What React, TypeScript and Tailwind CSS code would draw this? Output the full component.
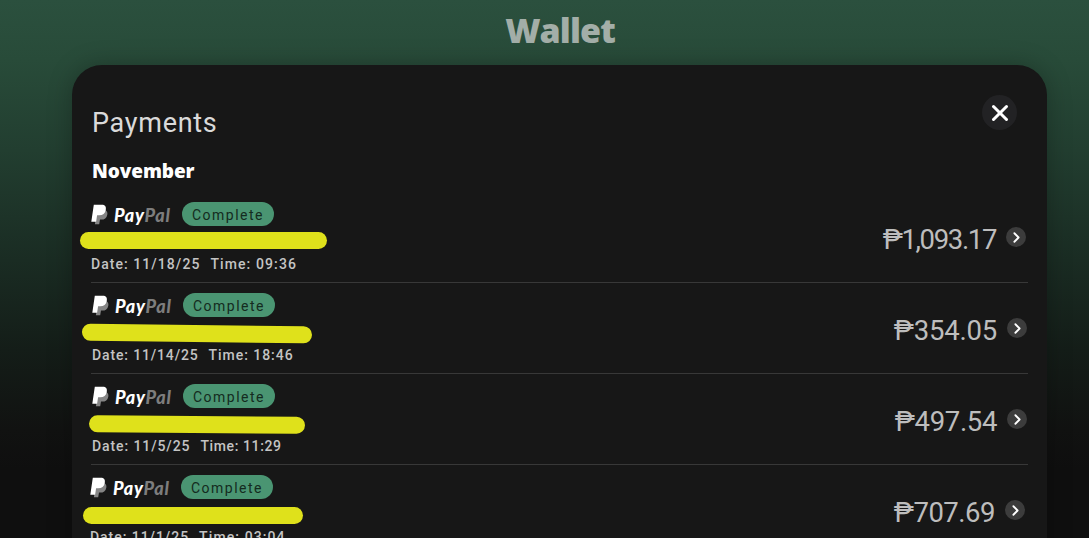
import { ChevronRight, X } from 'lucide-react'

interface Payment {
  amount: string
  date: string
  time: string
  // horizontal nudge of the row and the spacing of its texts
  left: string
  right: string
  amountSpacing: string
  dateSpacing: string
  timeSpacing: string
  marker: string
}

const payments: Payment[] = [
  {
    amount: '₱1,093.17',
    date: '11/18/25',
    time: '09:36',
    left: 'pl-[19px]',
    right: 'pr-[21px]',
    amountSpacing: 'tracking-[-1.35px]',
    dateSpacing: 'tracking-[1.05px]',
    timeSpacing: 'tracking-[1.1px]',
    marker: 'left-[8px] top-[40px] w-[247px]',
  },
  {
    amount: '₱354.05',
    date: '11/14/25',
    time: '18:46',
    left: 'pl-[20px]',
    right: 'pr-[20px]',
    amountSpacing: 'tracking-[-0.2px]',
    dateSpacing: 'tracking-[0.85px]',
    timeSpacing: 'tracking-[0.95px]',
    marker: 'left-[10px] top-[42px] w-[230px] rotate-[0.7deg]',
  },
  {
    amount: '₱497.54',
    date: '11/5/25',
    time: '11:29',
    left: 'pl-[20px]',
    right: 'pr-[20px]',
    amountSpacing: 'tracking-[-0.35px]',
    dateSpacing: 'tracking-[0.9px]',
    timeSpacing: 'tracking-[0.6px]',
    marker: 'left-[17px] top-[42px] w-[216px] rotate-[0.4deg]',
  },
  {
    amount: '₱707.69',
    date: '11/1/25',
    time: '03:04',
    left: 'pl-[18px]',
    right: 'pr-[22px]',
    amountSpacing: 'tracking-[-0.5px]',
    dateSpacing: 'tracking-[0.95px]',
    timeSpacing: 'tracking-[1.1px]',
    marker: 'left-[11px] top-[42px] w-[220px]',
  },
]

function PayPalLogo() {
  return (
    <div className="flex h-6 w-[81px] items-center">
      <svg viewBox="0 0 17 21" className="h-[21px] w-[17px] shrink-0">
        <path
          d="M6.2 6h8.2c1.7 1.1 2.3 2.7 1.9 4.7-.7 3.5-2.8 4.9-6.1 4.9H9l-.8 4.7H3.9z"
          fill="#858585"
        />
        <path
          d="M2.8.8h8.1c3 0 4.5 1.8 3.9 5-.6 3.7-3 5.5-6.6 5.5H6.1l-1 6.5H.3z"
          fill="#fff"
        />
      </svg>
      <span className="ml-[6px] pt-[2px] font-[Lato,sans-serif] text-[18px] font-black italic leading-6 tracking-[0.75px] text-white">
        Pay<span className="text-[#7d7d7d]">Pal</span>
      </span>
    </div>
  )
}

function PaymentRow({ payment }: { payment: Payment }) {
  return (
    <div className={`relative flex h-[91px] shrink-0 justify-between pt-[10px] ${payment.left} ${payment.right}`}>
      <div>
        <div className="flex h-6 items-center gap-[10px]">
          <PayPalLogo />
          <span className="flex h-6 w-[92px] items-center justify-center rounded-full bg-[#4a9572] pt-[2px] text-[14px] tracking-[1.5px] text-[#142b20]">
            Complete
          </span>
        </div>
        <div className="mt-[28px] flex gap-[10px] text-[14px] font-medium leading-5 text-[#c4c4c4]">
          <span className={payment.dateSpacing}>Date: {payment.date}</span>
          <span className={payment.timeSpacing}>Time: {payment.time}</span>
        </div>
      </div>

      <div className="flex h-[72px] items-center gap-[10px]">
        <span className={`pt-[3px] text-[27.5px] leading-8 text-[#bdbdbd] ${payment.amountSpacing}`}>
          {payment.amount}
        </span>
        <button className="mb-[2px] flex size-5 items-center justify-center rounded-full bg-[#3c3c3c]">
          <ChevronRight className="size-[17px] text-white" strokeWidth={2.6} />
        </button>
      </div>

      {/* Marker over the payer details */}
      <div className={`absolute h-[17px] rounded-full bg-[#dfe11b] ${payment.marker}`} />
    </div>
  )
}

export default function App() {
  return (
    <div className="flex h-[538px] w-full flex-col overflow-hidden bg-[linear-gradient(180deg,#2b503e_0px,#284b39_60px,#223e30_150px,#1a2c23_260px,#141d18_350px,#111211_430px,#0f0f0f_470px)] font-[Roboto,sans-serif]">
      <h1 className="ml-[31px] h-[65px] shrink-0 pt-[10px] text-center font-['Open_Sans',sans-serif] text-[34px] font-extrabold leading-10 tracking-[-0.9px] text-[#a3aea8]">
        Wallet
      </h1>

      <main className="ml-[72px] flex h-[600px] w-[975px] shrink-0 flex-col rounded-[30px] bg-[#171717] shadow-[0_0_24px_rgba(0,0,0,0.25)]">
        <header className="flex h-[127px] shrink-0 justify-between pl-5 pr-[30px]">
          <div>
            <h2 className="pt-[38px] text-[27px] leading-10 tracking-[0.7px] text-[#dadada]">Payments</h2>
            <h3 className="pt-[16px] font-['Open_Sans',sans-serif] text-[19px] font-extrabold leading-6 tracking-[-0.1px] text-white">
              November
            </h3>
          </div>
          <button className="mt-[30px] flex size-[35px] items-center justify-center rounded-full bg-[#222224]">
            <X className="size-[26px] text-white" strokeWidth={2.8} />
          </button>
        </header>

        {payments.map((payment, i) => (
          <div key={payment.date}>
            {i > 0 && <div className="-mt-px ml-[19px] mr-[19px] h-px bg-[#383838]" />}
            <PaymentRow payment={payment} />
          </div>
        ))}
      </main>
    </div>
  )
}
